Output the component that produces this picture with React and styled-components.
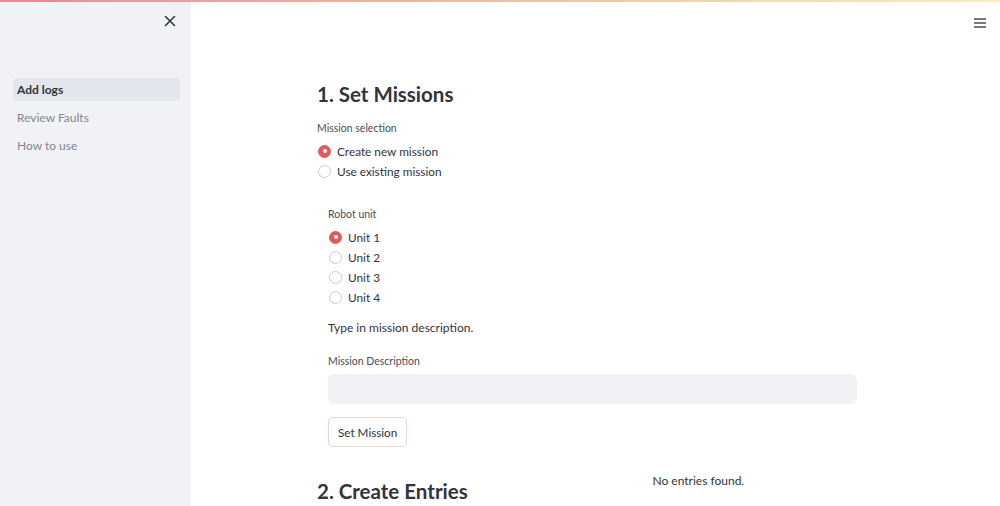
import React from 'react';
import styled, { createGlobalStyle } from 'styled-components';

const GlobalStyle = createGlobalStyle`
  html, body {
    margin: 0;
    padding: 0;
    background: #ffffff;
    font-family: Lato, "Noto Sans", sans-serif;
    color: #31333f;
  }
`;

const Page = styled.div`
  width: 1000px;
  height: 506px;
  position: relative;
  display: flex;
  overflow: hidden;
`;

const Decoration = styled.div`
  position: absolute;
  top: 0;
  left: 0;
  right: 0;
  height: 2px;
  background: linear-gradient(90deg, #e88b8b, #f3c9a6 60%, #f8eeb8);
  z-index: 2;
`;

const Sidebar = styled.aside`
  width: 191px;
  flex: none;
  background: #f0f2f6;
  display: flex;
  flex-direction: column;
  padding: 12px 11px 0 13px;
  box-sizing: border-box;
`;

const CloseRow = styled.div`
  display: flex;
  justify-content: flex-end;
  height: 18px;
  padding-right: 3px;
  margin-bottom: 48px;
  color: #31333f;
`;

const NavItem = styled.div`
  height: 23px;
  line-height: 23px;
  padding-left: 4px;
  margin-bottom: 5px;
  border-radius: 4px;
  font-size: 12px;
  font-weight: ${p => (p.active ? 700 : 400)};
  color: ${p => (p.active ? '#31333f' : '#84868f')};
  background: ${p => (p.active ? '#e3e6ec' : 'transparent')};
`;

const Main = styled.main`
  flex: 1;
  display: flex;
  flex-direction: column;
  align-items: center;
  position: relative;
`;

const MenuButton = styled.div`
  position: absolute;
  top: 13px;
  right: 13px;
  color: #4a4c55;
`;

const Block = styled.div`
  width: 557px;
  padding-top: 81px;
  display: flex;
  flex-direction: column;
`;

const Heading = styled.h2`
  margin: 0;
  font-size: 20.5px;
  line-height: 26px;
  font-weight: 700;
  color: #31333f;
`;

const WidgetLabel = styled.div`
  font-size: 10.5px;
  line-height: 16px;
  color: #4a4c55;
  margin-top: ${p => p.mt || 0}px;
`;

const RadioGroup = styled.div`
  display: flex;
  flex-direction: column;
  margin-top: 5px;
`;

const RadioRow = styled.label`
  display: flex;
  align-items: center;
  gap: 6px;
  height: 20px;
  font-size: 11.8px;
  color: #31333f;
`;

const RadioCircle = styled.span`
  width: 13px;
  height: 13px;
  border-radius: 50%;
  box-sizing: border-box;
  margin-left: 1px;
  background: ${p => (p.checked ? '#e25a5a' : '#ffffff')};
  border: 1px solid ${p => (p.checked ? '#e25a5a' : '#c9cbd0')};
  display: flex;
  align-items: center;
  justify-content: center;

  &::after {
    content: '';
    width: 4px;
    height: 4px;
    border-radius: 50%;
    background: ${p => (p.checked ? '#ffffff' : 'transparent')};
  }
`;

const Nested = styled.div`
  display: flex;
  flex-direction: column;
  padding: 0 17px 0 11px;
  margin-top: 25px;
`;

const Paragraph = styled.p`
  margin: 11px 0 0;
  font-size: 12px;
  line-height: 20px;
  color: #31333f;
`;

const TextInput = styled.div`
  height: 30px;
  margin-top: 5px;
  border-radius: 6px;
  background: #f0f2f6;
`;

const Button = styled.button`
  align-self: flex-start;
  margin-top: 13px;
  height: 30px;
  padding: 0 9px;
  border: 1px solid #ead5d5;
  border-radius: 5px;
  background: #ffffff;
  font-family: inherit;
  font-size: 11.7px;
  color: #31333f;
`;

const Columns = styled.div`
  display: grid;
  grid-template-columns: 1fr 1fr;
  gap: 16px;
  margin-top: 31px;
`;

const Empty = styled.div`
  font-size: 12px;
  line-height: 16px;
  padding-left: 49px;
  margin-top: -5px;
  color: #31333f;
`;

const Radio = ({ checked, children }) => (
  <RadioRow>
    <RadioCircle checked={checked} />
    {children}
  </RadioRow>
);

export default function App() {
  return (
    <Page>
      <GlobalStyle />
      <Decoration />
      <Sidebar>
        <CloseRow>
          <svg width="14" height="14" viewBox="0 0 14 14" style={{ marginTop: 2 }}>
            <path d="M2.5 2.5l9 9M11.5 2.5l-9 9" stroke="#31333f" strokeWidth="1.6" strokeLinecap="round" />
          </svg>
        </CloseRow>
        <NavItem active>Add logs</NavItem>
        <NavItem>Review Faults</NavItem>
        <NavItem>How to use</NavItem>
      </Sidebar>
      <Main>
        <MenuButton>
          <svg width="14" height="12" viewBox="0 0 14 12">
            <path d="M1 2h12M1 6h12M1 10h12" stroke="#4a4c55" strokeWidth="1.6" />
          </svg>
        </MenuButton>
        <Block>
          <Heading>1. Set Missions</Heading>
          <WidgetLabel mt={13}>Mission selection</WidgetLabel>
          <RadioGroup>
            <Radio checked>Create new mission</Radio>
            <Radio>Use existing mission</Radio>
          </RadioGroup>
          <Nested>
            <WidgetLabel>Robot unit</WidgetLabel>
            <RadioGroup>
              <Radio checked>Unit 1</Radio>
              <Radio>Unit 2</Radio>
              <Radio>Unit 3</Radio>
              <Radio>Unit 4</Radio>
            </RadioGroup>
            <Paragraph>Type in mission description.</Paragraph>
            <WidgetLabel mt={15}>Mission Description</WidgetLabel>
            <TextInput />
            <Button>Set Mission</Button>
          </Nested>
          <Columns>
            <Heading>2. Create Entries</Heading>
            <Empty>No entries found.</Empty>
          </Columns>
        </Block>
      </Main>
    </Page>
  );
}
